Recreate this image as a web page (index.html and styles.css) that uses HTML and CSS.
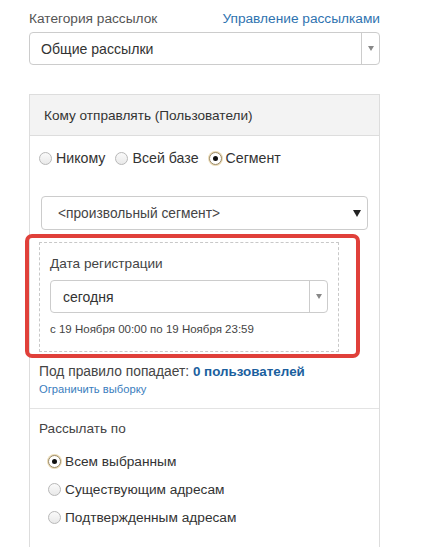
FILE: index.html
```html
<!DOCTYPE html>
<html lang="ru">
<head>
<meta charset="utf-8">
<link rel="stylesheet" href="styles.css">
</head>
<body>
<div class="page">
  <div class="top-row">
    <span class="label">Категория рассылок</span>
    <a class="link" href="#">Управление рассылками</a>
  </div>
  <div class="select select-main">
    <span class="select-text">Общие рассылки</span>
    <span class="select-arrow"><span class="tri"></span></span>
  </div>

  <div class="panel">
    <div class="panel-head">Кому отправлять (Пользователи)</div>
    <div class="panel-body">
      <div class="radio-row">
        <label class="radio"><span class="dot"></span>Никому</label>
        <label class="radio"><span class="dot"></span>Всей базе</label>
        <label class="radio"><span class="dot on"></span>Сегмент</label>
      </div>
      <div class="select select-plain">
        <span class="select-text">&lt;произвольный сегмент&gt;</span>
        <span class="tri-black"></span>
      </div>
      <div class="highlight">
        <div class="rule">
          <div class="rule-title">Дата регистрации</div>
          <div class="select select-small">
            <span class="select-text">сегодня</span>
            <span class="select-arrow"><span class="tri"></span></span>
          </div>
          <div class="rule-range">с 19 Ноября 00:00 по 19 Ноября 23:59</div>
        </div>
      </div>
      <div class="count">Под правило попадает: <b>0 пользователей</b></div>
      <a class="limit" href="#">Ограничить выборку</a>
    </div>
    <div class="panel-body section2">
      <div class="sub-title">Рассылать по</div>
      <div class="radio-list">
        <label class="radio"><span class="dot on"></span>Всем выбранным</label>
        <label class="radio"><span class="dot"></span>Существующим адресам</label>
        <label class="radio"><span class="dot"></span>Подтвержденным адресам</label>
      </div>
    </div>
  </div>
</div>
</body>
</html>
```

FILE: styles.css
```css
* { box-sizing: border-box; }
html, body { margin: 0; padding: 0; background: #fff; }
body {
  font-family: "Liberation Sans", Arial, sans-serif;
  color: #333;
  font-size: 13.6px;
}
.page {
  width: 351px;
  margin-left: 29px;
  padding-top: 8px;
}
.top-row {
  display: flex;
  justify-content: space-between;
  align-items: center;
  height: 20px;
  font-size: 13.7px;
}
.label { color: #555; }
.link { color: #2f73b0; text-decoration: none; }
.select {
  display: flex;
  align-items: center;
  border: 1px solid #ccc;
  border-radius: 4px;
  background: #fff;
}
.select-main {
  margin-top: 4px;
  height: 33px;
  font-size: 14.1px;
}
.select-text { flex: 1; color: #333; }
.select-main .select-text { padding-left: 11px; }
.select-arrow {
  width: 18px;
  align-self: stretch;
  border-left: 1px solid #ccc;
  display: flex;
  align-items: center;
  justify-content: center;
}
.tri {
  width: 0; height: 0;
  border-left: 3.5px solid transparent;
  border-right: 3.5px solid transparent;
  border-top: 5px solid #888;
}
.tri-black {
  width: 0; height: 0;
  border-left: 4px solid transparent;
  border-right: 4px solid transparent;
  border-top: 7px solid #222;
  margin-right: 6px;
}
.panel {
  margin-top: 29px;
  border: 1px solid #ddd;
  border-bottom: none;
  padding-bottom: 20px;
}
.panel-head {
  background: #f3f3f3;
  border-bottom: 1px solid #ddd;
  height: 41px;
  display: flex;
  align-items: center;
  padding-left: 14px;
  color: #333;
}
.panel-body {
  padding: 0 12px 0 9px;
}
.radio-row {
  display: flex;
  align-items: center;
  gap: 10px;
  height: 20px;
  margin-top: 12px;
  font-size: 14.2px;
}
.radio {
  display: flex;
  align-items: center;
  gap: 4px;
  color: #333;
}
.dot {
  width: 13px;
  height: 13px;
  border-radius: 50%;
  border: 1px solid #b8b8b8;
  background: linear-gradient(#fafafa, #e9e9e9);
  display: inline-flex;
  align-items: center;
  justify-content: center;
}
.dot.on {
  border-color: #9a8a6a;
  box-shadow: 0 0 0 1px #ecdcb6;
  background: #fff;
}
.dot.on::after {
  content: "";
  width: 5px;
  height: 5px;
  border-radius: 50%;
  background: #111;
}
.select-plain {
  margin: 28px 0 0 2px;
  width: 327px;
  height: 34px;
  font-size: 13.75px;
}
.select-plain .select-text { padding-left: 16px; color: #444; }
.highlight {
  margin: 4px 0 0 -14px;
  width: 335px;
  border: 4px solid #e0403a;
  border-radius: 7px;
  padding: 4px 17px 2px 10px;
}
.rule {
  border: 1px dashed #c8c8c8;
  padding: 11px 10px 14px 10px;
}
.rule-title {
  height: 20px;
  line-height: 20px;
  color: #444;
}
.select-small {
  margin-top: 6px;
  height: 33px;
  font-size: 14px;
}
.select-small .select-text { padding-left: 12px; }
.rule-range {
  margin-top: 8px;
  font-size: 11.5px;
  line-height: 16px;
  color: #444;
}
.count {
  margin-top: 4px;
  height: 20px;
  line-height: 20px;
  font-size: 13.8px;
  color: #444;
}
.count b { color: #1b5f9e; font-size: 13.4px; }
.limit {
  display: block;
  font-size: 11.2px;
  line-height: 15px;
  color: #3a7dbd;
  text-decoration: none;
}
.section2 {
  margin-top: 11px;
  border-top: 1px solid #e3e3e3;
  padding-top: 10px;
}
.sub-title {
  height: 20px;
  line-height: 20px;
  color: #444;
}
.radio-list {
  margin-top: 12px;
  padding-left: 9px;
  display: flex;
  flex-direction: column;
  gap: 8px;
  font-size: 13.7px;
}
.radio-list .radio { height: 20px; }
```
